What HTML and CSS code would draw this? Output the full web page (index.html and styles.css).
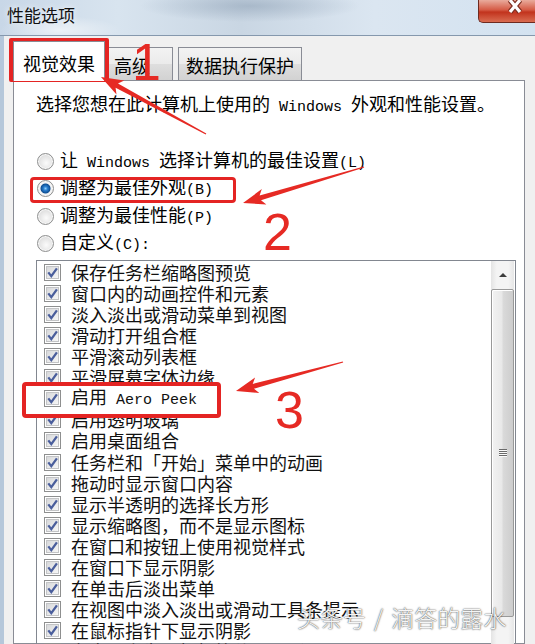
FILE: index.html
```html
<!DOCTYPE html>
<html lang="zh-CN">
<head>
    <meta charset="UTF-8">
    <meta name="viewport" content="width=device-width, initial-scale=1.0">
    <title>性能选项</title>
    <link rel="stylesheet" href="styles.css">
</head>
<body>
    <svg class="defs" width="0" height="0">
        <defs>
            <linearGradient id="cbFill" x1="0" y1="0" x2="1" y2="1">
                <stop offset="0" stop-color="#d6d7d9"/>
                <stop offset="1" stop-color="#f8f8f8"/>
            </linearGradient>
            <symbol id="cb" viewBox="0 0 17 17">
                <rect x="0.5" y="0.5" width="16" height="16" fill="#fff" stroke="#8e8f8f"/>
                <rect x="2.5" y="2.5" width="12" height="12" fill="url(#cbFill)" stroke="#c3c4c6"/>
                <path d="M4.3 8.4 L7.3 12.1 L12.9 4.3" fill="none" stroke="#4a5e9c" stroke-width="2.3"/>
            </symbol>
        </defs>
    </svg>

    <div class="window">
        <div class="titlebar">
            <span class="title">性能选项</span>
            <span class="close">
                <svg width="16" height="15" viewBox="0 0 16 15">
                    <path d="M3 0 L13 12 M13 0 L3 12" stroke="#7d2d20" stroke-width="5.5" fill="none"/>
                    <path d="M3 0 L13 12 M13 0 L3 12" stroke="#fff" stroke-width="3.2" fill="none"/>
                </svg>
            </span>
        </div>

        <div class="frame">
            <div class="tabs">
                <div class="tab active">视觉效果</div>
                <div class="tab wide">高级</div>
                <div class="tab">数据执行保护</div>
            </div>

            <div class="panel">
                <p class="desc">选择您想在此计算机上使用的<span class="lat"> Windows </span>外观和性能设置。</p>

                <div class="radios">
                    <div class="radio"><span class="dot"></span><span class="txt">让<span class="lat"> Windows </span>选择计算机的最佳设置<span class="lat">(L)</span></span></div>
                    <div class="radio"><span class="dot on"></span><span class="txt">调整为最佳外观<span class="lat">(B)</span></span></div>
                    <div class="radio"><span class="dot"></span><span class="txt">调整为最佳性能<span class="lat">(P)</span></span></div>
                    <div class="radio"><span class="dot"></span><span class="txt">自定义<span class="lat">(C):</span></span></div>
                </div>

                <div class="listbox">
                    <ul class="items">
                        <li><svg class="cb"><use href="#cb"/></svg><span class="txt">保存任务栏缩略图预览</span></li>
                        <li><svg class="cb"><use href="#cb"/></svg><span class="txt">窗口内的动画控件和元素</span></li>
                        <li><svg class="cb"><use href="#cb"/></svg><span class="txt">淡入淡出或滑动菜单到视图</span></li>
                        <li><svg class="cb"><use href="#cb"/></svg><span class="txt">滑动打开组合框</span></li>
                        <li><svg class="cb"><use href="#cb"/></svg><span class="txt">平滑滚动列表框</span></li>
                        <li><svg class="cb"><use href="#cb"/></svg><span class="txt">平滑屏幕字体边缘</span></li>
                        <li class="peek"><svg class="cb"><use href="#cb"/></svg><span class="txt">启用<span class="lat"> Aero Peek</span></span></li>
                        <li><svg class="cb"><use href="#cb"/></svg><span class="txt">启用透明玻璃</span></li>
                        <li><svg class="cb"><use href="#cb"/></svg><span class="txt">启用桌面组合</span></li>
                        <li><svg class="cb"><use href="#cb"/></svg><span class="txt">任务栏和「开始」菜单中的动画</span></li>
                        <li><svg class="cb"><use href="#cb"/></svg><span class="txt">拖动时显示窗口内容</span></li>
                        <li><svg class="cb"><use href="#cb"/></svg><span class="txt">显示半透明的选择长方形</span></li>
                        <li><svg class="cb"><use href="#cb"/></svg><span class="txt">显示缩略图，而不是显示图标</span></li>
                        <li><svg class="cb"><use href="#cb"/></svg><span class="txt">在窗口和按钮上使用视觉样式</span></li>
                        <li><svg class="cb"><use href="#cb"/></svg><span class="txt">在窗口下显示阴影</span></li>
                        <li><svg class="cb"><use href="#cb"/></svg><span class="txt">在单击后淡出菜单</span></li>
                        <li><svg class="cb"><use href="#cb"/></svg><span class="txt">在视图中淡入淡出或滑动工具条提示</span></li>
                        <li><svg class="cb"><use href="#cb"/></svg><span class="txt">在鼠标指针下显示阴影</span></li>
                        <li><svg class="cb"><use href="#cb"/></svg><span class="txt">在桌面上为图标标签使用阴影</span></li>
                    </ul>
                    <div class="scrollbar">
                        <div class="sb-up"><span class="tri"></span></div>
                        <div class="sb-thumb"><span class="grip"></span></div>
                    </div>
                </div>
            </div>
        </div>

        <!-- annotations drawn over the dialog -->
        <div class="mark mark-tab"></div>
        <div class="mark mark-radio"></div>
        <div class="mark mark-peek"></div>

        <span class="num num1">1</span>
        <span class="num num2">2</span>
        <span class="num num3">3</span>

        <svg class="arrows" width="535" height="644" viewBox="0 0 535 644">
            <polygon points="206.3,133.5 118.0,83.4 124.2,80.5 101,77 116.5,94.5 115.6,87.8 205.7,134.5"/>
            <polygon points="363.8,166.4 259.6,195.5 261.8,189.1 243,203 266.4,204.4 261.0,200.3 364.2,167.6"/>
            <polygon points="342.8,361.4 252.7,383.9 255.1,377.5 236,391 259.3,393.0 254.0,388.7 343.2,362.6"/>
        </svg>

        <div class="watermark">头条号 / 滴答的露水</div>
    </div>
</body>
</html>
```

FILE: styles.css
```css
* {
    box-sizing: border-box;
}
body {
    margin: 0;
    width: 535px;
    height: 644px;
    overflow: hidden;
    font-family: "Noto Sans CJK SC", sans-serif;
    color: #000;
    background: #f0f0f0;
}
.defs {
    position: absolute;
    width: 0;
    height: 0;
}
.window {
    position: relative;
    width: 535px;
    height: 644px;
    overflow: hidden;
}

/* title bar */
.titlebar {
    height: 36px;
    display: flex;
    justify-content: space-between;
    align-items: flex-start;
    border-bottom: 1px solid #8598ad;
    background:
        radial-gradient(ellipse 110px 16px at 250px 6px, rgba(128, 148, 170, 0.45), transparent),
        radial-gradient(ellipse 60px 14px at 60px 30px, rgba(255, 255, 255, 0.6), transparent),
        linear-gradient(90deg, #c8d7e7 0%, #d8e4ef 22%, #c9d6e3 45%, #dbe6f1 70%, #d3e2f0 100%);
}
.title {
    margin: 5px 0 0 7px;
    font-size: 17px;
    line-height: 20px;
    color: #111;
    text-shadow: 0 0 6px rgba(255, 255, 255, 0.9);
}
.close {
    width: 57px;
    height: 23px;
    padding-left: 28px;
    border: 1px solid #6e2a1f;
    border-top: none;
    border-right: none;
    border-radius: 0 0 0 5px;
    background: linear-gradient(#e9ab9c, #d55a44 45%, #c2331d 55%, #d96c51);
}
.close svg {
    display: block;
}

/* dialog body */
.frame {
    height: 608px;
    border-left: 4px solid #b5c7da;
    padding: 0 10px 0 9px;
}
.tabs {
    display: flex;
    align-items: flex-end;
    height: 44px;
}
.tab {
    height: 33px;
    padding: 2px 7px 0;
    font-size: 18px;
    line-height: 30px;
    white-space: nowrap;
    border: 1px solid #898c95;
    border-bottom: none;
    background: linear-gradient(#f3f3f3, #ebebeb 50%, #dedede 51%, #d2d2d2);
}
.tab.wide {
    padding: 2px 22px 0 8px;
}
.tab + .tab {
    margin-left: 5px;
}
.tab.active {
    position: relative;
    z-index: 1;
    height: 40px;
    margin-bottom: -1px;
    padding: 4px 9px 0;
    line-height: 34px;
    background: #fff;
}
.tab.active + .tab {
    margin-left: 0;
}
.panel {
    height: 564px;
    padding: 11px 0 0 22px;
    background: #fff;
    border: 1px solid #898c95;
}
.desc {
    height: 22px;
    margin: 0;
    font-size: 18px;
    line-height: 22px;
    white-space: nowrap;
}
.lat {
    font-family: "Liberation Mono", monospace;
    font-size: 15px;
}
.txt {
    font-size: 18px;
    line-height: 21px;
    white-space: nowrap;
}

/* radio buttons */
.radios {
    margin-top: 34px;
}
.radio {
    display: flex;
    align-items: center;
    height: 27.3px;
    margin-left: 1px;
}
.dot {
    width: 17px;
    height: 17px;
    margin-right: 6px;
    flex: none;
    border-radius: 50%;
    border: 1px solid #8e8f8f;
    background: radial-gradient(circle at 55% 60%, #fbfbfb, #e2e2e2 60%, #cdcdcd);
    box-shadow: inset 0 0 0 1px #f7f7f7;
}
.dot.on {
    background: radial-gradient(circle at 50% 50%, #8fd0fa 0, #2a7fd0 2px, #0e4f94 4.5px, #f4f4f4 5.5px, #dedede 100%);
}

/* list of options */
.listbox {
    display: flex;
    width: 480px;
    height: 400px;
    margin-top: 2.5px;
    border: 1px solid #828790;
    overflow: hidden;
}
.items {
    flex: 1;
    margin: 0;
    padding: 1px 0 0 7px;
    list-style: none;
}
.items li {
    display: flex;
    align-items: center;
    gap: 10px;
    height: 21.1px;
    color: #111;
}
.items li.peek {
    position: relative;
    z-index: 3;
}
.cb {
    width: 17px;
    height: 17px;
    flex: none;
}
.scrollbar {
    width: 23px;
    margin-right: 1px;
    display: flex;
    flex-direction: column;
    background: linear-gradient(90deg, #e4e4e4, #f4f4f4 25%, #f4f4f4 75%, #e6e6e6);
}
.sb-up {
    height: 28px;
    display: flex;
    justify-content: center;
    align-items: center;
}
.tri {
    width: 0;
    height: 0;
    border-left: 4px solid transparent;
    border-right: 4px solid transparent;
    border-bottom: 4px solid #3d3d3d;
}
.sb-thumb {
    height: 328px;
    display: flex;
    justify-content: center;
    align-items: center;
    border: 1px solid #999;
    border-radius: 2px;
    background: linear-gradient(90deg, #f2f2f2, #e9e9e9 45%, #d9d9d9 55%, #cdcdcd);
    box-shadow: inset 1px 1px 0 #fff;
}
.grip {
    width: 8px;
    height: 8px;
    background: repeating-linear-gradient(#6a6a6a 0 1px, #fafafa 1px 2px);
}

/* red annotations */
.mark {
    position: absolute;
    border: 4px solid #e42423;
    border-radius: 4px;
}
.mark-tab {
    left: 9px;
    top: 38px;
    width: 100px;
    height: 44px;
    border-radius: 2px;
}
.mark-radio {
    left: 30px;
    top: 177px;
    width: 206px;
    height: 26px;
    border-width: 3.5px;
}
.mark-peek {
    z-index: 2;
    left: 22px;
    top: 382px;
    width: 199px;
    height: 36px;
    background: #fff;
}
.num {
    position: absolute;
    z-index: 4;
    font-family: "Liberation Sans", Arial, sans-serif;
    font-size: 52px;
    line-height: 52px;
    color: #e62a24;
}
.num1 {
    left: 132px;
    top: 36px;
}
.num2 {
    left: 263px;
    top: 206px;
}
.num3 {
    left: 275px;
    top: 384px;
}
.arrows {
    position: absolute;
    z-index: 4;
    left: 0;
    top: 0;
    fill: #e62a24;
    pointer-events: none;
}
.watermark {
    position: absolute;
    z-index: 5;
    left: 297px;
    top: 602px;
    font-size: 23px;
    font-weight: 300;
    line-height: 30px;
    word-spacing: 3px;
    white-space: nowrap;
    color: rgba(255, 255, 255, 0.95);
    text-shadow: 0 0 1px #555, 0 0 2px rgba(0, 0, 0, 0.6);
}
```
